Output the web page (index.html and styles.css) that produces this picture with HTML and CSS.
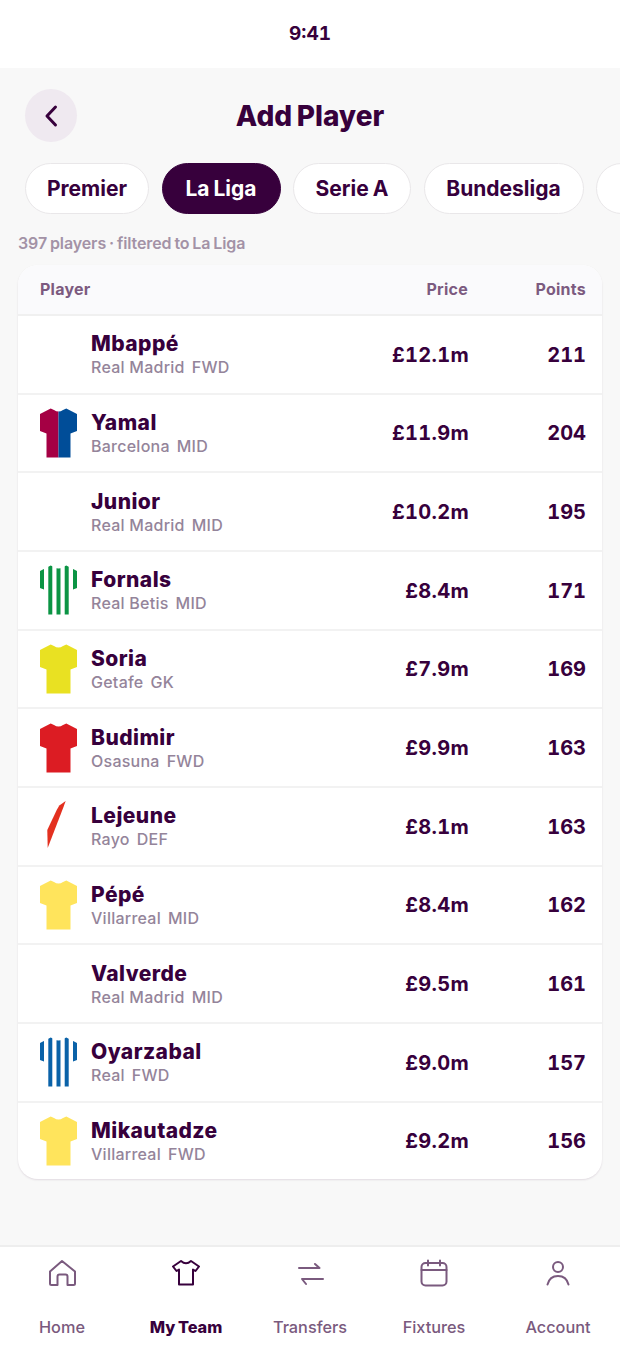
FILE: index.html
```html
<!DOCTYPE html>
<html lang="en">
<head>
<meta charset="utf-8">
<title>Add Player</title>
<link rel="stylesheet" href="styles.css">
</head>
<body>
<svg class="defs" width="0" height="0" aria-hidden="true">
  <defs>
    <clipPath id="shirt"><path d="M10.7 .5 L14 2 Q18.5 5 23 2 L26.3 .5 L37 6 V23 L30.5 25.5 V49.5 H6.5 V25.5 L0 23 V6 Z"/></clipPath>
  </defs>
</svg>
<div class="phone">
  <div class="status">9:41</div>
  <main class="screen">
    <header class="topbar">
      <button class="back" aria-label="Back">
        <svg width="16" height="24" viewBox="0 0 16 24"><path d="M12.5 3 L4 12 L12.5 21" fill="none" stroke="#37003c" stroke-width="3" stroke-linecap="round" stroke-linejoin="round"/></svg>
      </button>
      <h1>Add Player</h1>
    </header>
    <nav class="chips">
      <span class="chip">Premier</span>
      <span class="chip active">La Liga</span>
      <span class="chip">Serie A</span>
      <span class="chip">Bundesliga</span>
      <span class="chip more"></span>
    </nav>
    <p class="count">397 players · filtered to La Liga</p>
    <section class="table">
      <div class="thead"><span class="c-player">Player</span><span class="c-price">Price</span><span class="c-points">Points</span></div>

      <div class="row"><span class="kit"></span><div class="who"><b>Mbappé</b><small><span>Real Madrid</span><span>FWD</span></small></div><span class="price">£12.1m</span><span class="pts">211</span></div>

      <div class="row"><svg class="kit" viewBox="0 0 37 50"><g clip-path="url(#shirt)"><rect width="18.5" height="50" fill="#a50044"/><rect x="18.5" width="18.5" height="50" fill="#004d98"/></g></svg><div class="who"><b>Yamal</b><small><span>Barcelona</span><span>MID</span></small></div><span class="price">£11.9m</span><span class="pts">204</span></div>

      <div class="row"><span class="kit"></span><div class="who"><b>Junior</b><small><span>Real Madrid</span><span>MID</span></small></div><span class="price">£10.2m</span><span class="pts">195</span></div>

      <div class="row"><svg class="kit" viewBox="0 0 37 50"><g clip-path="url(#shirt)" fill="#0b9444"><rect x="0" width="4" height="50"/><rect x="8.3" width="4" height="50"/><rect x="16.5" width="4" height="50"/><rect x="24.7" width="4" height="50"/><rect x="33" width="4" height="50"/></g></svg><div class="who"><b>Fornals</b><small><span>Real Betis</span><span>MID</span></small></div><span class="price">£8.4m</span><span class="pts">171</span></div>

      <div class="row"><svg class="kit" viewBox="0 0 37 50"><rect width="37" height="50" fill="#e9e122" clip-path="url(#shirt)"/></svg><div class="who"><b>Soria</b><small><span>Getafe</span><span>GK</span></small></div><span class="price">£7.9m</span><span class="pts">169</span></div>

      <div class="row"><svg class="kit" viewBox="0 0 37 50"><rect width="37" height="50" fill="#dc1c23" clip-path="url(#shirt)"/></svg><div class="who"><b>Budimir</b><small><span>Osasuna</span><span>FWD</span></small></div><span class="price">£9.9m</span><span class="pts">163</span></div>

      <div class="row"><svg class="kit" viewBox="0 0 37 50"><path d="M25.7 0 L23.3 6.5 L7.7 47 L7.3 29 L16.7 9 L19.3 4.5 Z" fill="#e3301f"/></svg><div class="who"><b>Lejeune</b><small><span>Rayo</span><span>DEF</span></small></div><span class="price">£8.1m</span><span class="pts">163</span></div>

      <div class="row"><svg class="kit" viewBox="0 0 37 50"><rect width="37" height="50" fill="#ffe45c" clip-path="url(#shirt)"/></svg><div class="who"><b>Pépé</b><small><span>Villarreal</span><span>MID</span></small></div><span class="price">£8.4m</span><span class="pts">162</span></div>

      <div class="row"><span class="kit"></span><div class="who"><b>Valverde</b><small><span>Real Madrid</span><span>MID</span></small></div><span class="price">£9.5m</span><span class="pts">161</span></div>

      <div class="row"><svg class="kit" viewBox="0 0 37 50"><g clip-path="url(#shirt)" fill="#0a62a8"><rect x="0" width="4" height="50"/><rect x="8.3" width="4" height="50"/><rect x="16.5" width="4" height="50"/><rect x="24.7" width="4" height="50"/><rect x="33" width="4" height="50"/></g></svg><div class="who"><b>Oyarzabal</b><small><span>Real</span><span>FWD</span></small></div><span class="price">£9.0m</span><span class="pts">157</span></div>

      <div class="row"><svg class="kit" viewBox="0 0 37 50"><rect width="37" height="50" fill="#ffe45c" clip-path="url(#shirt)"/></svg><div class="who"><b>Mikautadze</b><small><span>Villarreal</span><span>FWD</span></small></div><span class="price">£9.2m</span><span class="pts">156</span></div>
    </section>
  </main>
  <footer class="tabs">
    <div class="tab"><svg viewBox="0 0 28 28"><path d="M2 12.5 L14 2 L27 12.5 V24.5 a1.5 1.5 0 0 1 -1.5 1.5 H19.5 V17.5 a2 2 0 0 0 -2 -2 H11.5 a2 2 0 0 0 -2 2 V26 H3.5 a1.5 1.5 0 0 1 -1.5 -1.5 Z"/></svg><span>Home</span></div>
    <div class="tab on"><svg viewBox="0 0 28 28"><path d="M9 2 Q14 6.5 19 2 L27 7.5 L23.5 12 L21 10.5 V25.5 H7 V10.5 L4.5 12 L1 7.5 Z"/></svg><span>My Team</span></div>
    <div class="tab"><svg viewBox="0 0 28 28"><path d="M3 9 H23.5 L19 5 M27 20 H6 L10 25"/></svg><span>Transfers</span></div>
    <div class="tab"><svg viewBox="0 0 28 28"><rect x="1.5" y="4" width="25" height="22.5" rx="4"/><path d="M1.5 11 H26.5 M8 1.5 V6.5 M20 1.5 V6.5"/></svg><span>Fixtures</span></div>
    <div class="tab"><svg viewBox="0 0 28 28"><circle cx="14" cy="8" r="5"/><path d="M3.5 25.5 C5 19.5 9 17 14 17 S23 19.5 24.5 25.5"/></svg><span>Account</span></div>
  </footer>
</div>
</body>
</html>
```
FILE: styles.css
```css
* { box-sizing: border-box; }
html, body { margin: 0; padding: 0; }
body { font-family: Inter, "Liberation Sans", Arial, sans-serif; color: #37003c; background: #f8f8f8; }
.defs { position: absolute; }
.phone { width: 620px; height: 1347px; display: flex; flex-direction: column; overflow: hidden; }
.status { height: 68px; padding-bottom: 2px; background: #fff; display: flex; align-items: center; justify-content: center; font-weight: 700; font-size: 19px; font-variant-numeric: tabular-nums; }
.screen { flex: 1; background: #f8f8f8; min-height: 0; }
.topbar { position: relative; height: 95px; display: flex; align-items: center; justify-content: center; }
.back { position: absolute; left: 25px; top: 21px; width: 52px; height: 53px; border: 0; border-radius: 50%; background: #efe9f0; display: flex; align-items: center; justify-content: center; padding: 0; }
h1 { margin: 0; font-size: 28px; font-weight: 800; word-spacing: -1.5px; }
.chips { display: flex; gap: 12.5px; padding-left: 25px; overflow: hidden; }
.chip { flex: none; height: 51px; width: 124px; justify-content: center; border: 1px solid #e9e7e9; border-radius: 26px; background: #fff; display: flex; align-items: center; font-weight: 700; font-size: 21px; word-spacing: -1px; }
.chip:nth-child(2) { width: 119px; }
.chip:nth-child(3) { width: 118px; }
.chip:nth-child(4) { width: 160px; }
.chip.more { width: 100px; }
.chip.active { background: #37003c; border-color: #37003c; color: #fff; }
.count { margin: 18px 0 0 18px; height: 22px; line-height: 22px; font-size: 16px; font-weight: 600; color: #a392a6; letter-spacing: -.1px; word-spacing: -1px; }
.table { margin: 11px 18px 0; background: #fff; border-radius: 20px; box-shadow: 0 1px 2px rgba(55,0,60,.12); overflow: hidden; }
.thead { height: 51px; padding: 0 16px 1px 22px; background: #fafafc; display: flex; align-items: center; font-size: 16px; font-weight: 700; letter-spacing: .25px; color: #7c5a80; border-bottom: 2px solid #f0f0f0; }
.c-player { flex: 1; }
.c-price { width: 80px; text-align: right; }
.c-points { width: 118px; text-align: right; }
.row { height: 78.67px; display: flex; align-items: center; padding: 0 16px 0 22px; border-bottom: 2px solid #f2f2f2; }
.row:last-child { border-bottom: 0; height: 76px; }
.kit { flex: none; width: 37px; height: 50px; display: block; margin-right: 14px; }
.who { flex: 1; display: flex; flex-direction: column; min-width: 0; }
.who b { font-size: 21px; font-weight: 800; line-height: 26px; letter-spacing: .45px; }
.who small { display: flex; gap: 7px; font-size: 16px; line-height: 20px; color: #94849a; font-weight: 500; letter-spacing: .25px; }
.price, .pts { padding-top: 1px; text-align: right; font-weight: 700; font-size: 20px; font-variant-numeric: tabular-nums; }
.price { width: 101px; letter-spacing: .3px; }
.pts { width: 117px; }
.tabs { height: 102px; background: #fff; border-top: 2px solid #eeeeee; display: grid; grid-template-columns: repeat(5, 1fr); }
.tab { display: flex; flex-direction: column; align-items: center; padding-top: 12px; color: #7a5a7e; font-size: 16.3px; font-weight: 500; }
.tab svg { width: 28px; height: 28px; fill: none; stroke: currentColor; stroke-width: 2; stroke-linejoin: round; stroke-linecap: round; }
.tab span { margin-top: 28px; line-height: 24px; white-space: nowrap; }
.tab.on { color: #37003c; font-weight: 800; word-spacing: -1px; }
```
